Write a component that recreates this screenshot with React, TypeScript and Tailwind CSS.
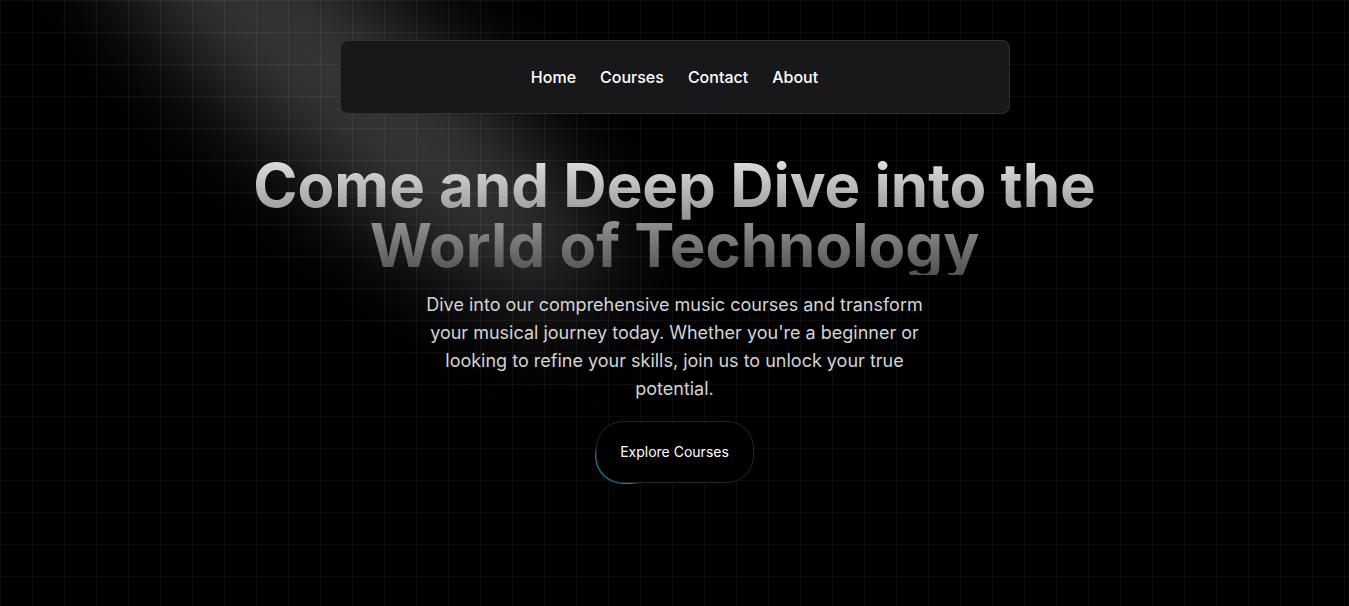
import React from "react";

const navLinks = ["Home", "Courses", "Contact", "About"];

const Spotlight: React.FC = () => {
  return (
    <svg
      className="pointer-events-none absolute inset-0 z-0 h-full w-full"
      xmlns="http://www.w3.org/2000/svg"
    >
      <defs>
        <filter
          id="spotBlur"
          x="-100%"
          y="-100%"
          width="300%"
          height="300%"
        >
          <feGaussianBlur stdDeviation="50" />
        </filter>
      </defs>
      <ellipse
        cx="345"
        cy="85"
        rx="330"
        ry="85"
        transform="rotate(40 345 85)"
        fill="white"
        fillOpacity="0.22"
        filter="url(#spotBlur)"
      />
    </svg>
  );
};

const ExploreButton: React.FC = () => {
  return (
    <button className="relative mt-[17px] h-16 w-40 overflow-hidden rounded-[1.75rem] bg-transparent p-px">
      <div className="absolute inset-0 rounded-[1.75rem]">
        <div className="absolute left-[-27px] top-[16px] h-20 w-20 bg-[radial-gradient(#0ea5e9_40%,transparent_60%)] opacity-80"></div>
      </div>
      <div className="relative flex h-full w-full items-center justify-center rounded-[calc(1.75rem*0.96)] border border-neutral-800 bg-black text-sm text-white antialiased">
        Explore Courses
      </div>
    </button>
  );
};

export default function App() {
  return (
    <div className="relative h-[606px] w-full overflow-hidden bg-black bg-[linear-gradient(to_right,#ffffff0d_1px,transparent_1px),linear-gradient(to_bottom,#ffffff0d_1px,transparent_1px)] bg-[size:32px_32px] font-['Inter',sans-serif]">
      <Spotlight />
      <div className="relative z-10 flex flex-col items-center">
        <nav className="mt-10 flex w-[670px] justify-center gap-6 rounded-lg border border-white/10 bg-zinc-900 py-6 font-medium text-white">
          {navLinks.map((link) => (
            <a key={link} href="#" className="text-base">
              {link}
            </a>
          ))}
        </nav>
        <h1 className="mt-[41px] bg-gradient-to-b from-neutral-200 to-neutral-600 bg-clip-text text-center text-6xl font-bold leading-none text-transparent">
          Come and Deep Dive into the
          <br />
          World of Technology
        </h1>
        <p className="mt-4 max-w-lg text-center text-lg text-neutral-300">
          Dive into our comprehensive music courses and transform your musical
          journey today. Whether you're a beginner or looking to refine your
          skills, join us to unlock your true potential.
        </p>
        <ExploreButton />
      </div>
    </div>
  );
}
